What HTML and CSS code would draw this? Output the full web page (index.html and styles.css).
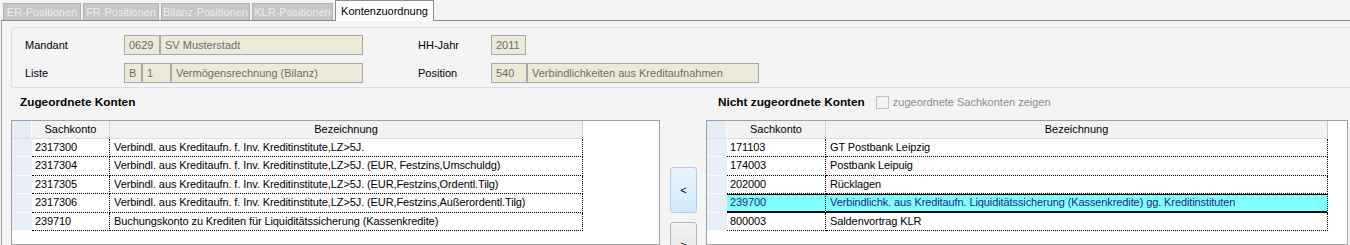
FILE: index.html
```html
<!DOCTYPE html>
<html lang="de">
  <head>
    <meta charset="utf-8" />
    <title>Kontenzuordnung</title>
    <link rel="stylesheet" href="styles.css">
  </head>
  <body>
    <!-- Tabs -->
    <div class="tabs">
      <div class="tab w-er">ER-Positionen</div>
      <div class="tab w-fr">FR-Positionen</div>
      <div class="tab w-bil">Bilanz-Positionen</div>
      <div class="tab w-klr">KLR-Positionen</div>
      <div class="tab active">Kontenzuordnung</div>
    </div>

    <div class="page">
      <!-- Kopfdaten -->
      <div class="group">
        <div class="form-row">
          <span class="label">Mandant</span>
          <div class="fields">
            <span class="field f-36">0629</span>
            <span class="field f-203">SV Musterstadt</span>
          </div>
          <span class="label label-2">HH-Jahr</span>
          <div class="fields">
            <span class="field f-35">2011</span>
          </div>
        </div>
        <div class="form-row">
          <span class="label">Liste</span>
          <div class="fields">
            <span class="field f-18">B</span>
            <span class="field f-29">1</span>
            <span class="field f-192">Vermögensrechnung (Bilanz)</span>
          </div>
          <span class="label label-2">Position</span>
          <div class="fields">
            <span class="field f-36">540</span>
            <span class="field f-232">Verbindlichkeiten aus Kreditaufnahmen</span>
          </div>
        </div>
      </div>

      <div class="lists">
        <!-- Zugeordnete Konten -->
        <div class="list list-left">
          <div class="list-head">
            <h2>Zugeordnete Konten</h2>
          </div>
          <div class="grid">
            <div class="row header">
              <div class="rh"></div>
              <div class="c1">Sachkonto</div>
              <div class="c2">Bezeichnung</div>
            </div>
            <div class="row">
              <div class="rh"></div>
              <div class="c1">2317300</div>
              <div class="c2">Verbindl. aus Kreditaufn. f. Inv. Kreditinstitute,LZ&gt;5J.</div>
            </div>
            <div class="row">
              <div class="rh"></div>
              <div class="c1">2317304</div>
              <div class="c2">Verbindl. aus Kreditaufn. f. Inv. Kreditinstitute,LZ&gt;5J. (EUR, Festzins,Umschuldg)</div>
            </div>
            <div class="row">
              <div class="rh"></div>
              <div class="c1">2317305</div>
              <div class="c2">Verbindl. aus Kreditaufn. f. Inv. Kreditinstitute,LZ&gt;5J. (EUR,Festzins,Ordentl.Tilg)</div>
            </div>
            <div class="row">
              <div class="rh"></div>
              <div class="c1">2317306</div>
              <div class="c2">Verbindl. aus Kreditaufn. f. Inv. Kreditinstitute,LZ&gt;5J. (EUR,Festzins,Außerordentl.Tilg)</div>
            </div>
            <div class="row">
              <div class="rh"></div>
              <div class="c1">239710</div>
              <div class="c2">Buchungskonto zu Krediten für Liquiditätssicherung (Kassenkredite)</div>
            </div>
          </div>
        </div>

        <!-- Buttons -->
        <div class="move-buttons">
          <button class="btn">&lt;</button>
          <button class="btn">&gt;</button>
        </div>

        <!-- Nicht zugeordnete Konten -->
        <div class="list list-right">
          <div class="list-head">
            <h2>Nicht zugeordnete Konten</h2>
            <label class="check"><span class="box"></span>zugeordnete Sachkonten zeigen</label>
          </div>
          <div class="grid">
            <div class="row header">
              <div class="rh"></div>
              <div class="c1">Sachkonto</div>
              <div class="c2">Bezeichnung</div>
            </div>
            <div class="row">
              <div class="rh"></div>
              <div class="c1">171103</div>
              <div class="c2">GT Postbank Leipzig</div>
            </div>
            <div class="row">
              <div class="rh"></div>
              <div class="c1">174003</div>
              <div class="c2">Postbank Leipuig</div>
            </div>
            <div class="row">
              <div class="rh"></div>
              <div class="c1">202000</div>
              <div class="c2">Rücklagen</div>
            </div>
            <div class="row selected">
              <div class="rh"></div>
              <div class="c1">239700</div>
              <div class="c2">Verbindlichk. aus Kreditaufn. Liquiditätssicherung (Kassenkredite) gg. Kreditinstituten</div>
            </div>
            <div class="row">
              <div class="rh"></div>
              <div class="c1">800003</div>
              <div class="c2">Saldenvortrag KLR</div>
            </div>
          </div>
        </div>
      </div>
    </div>
  </body>
</html>
```

FILE: styles.css
```css
* {
  margin: 0;
  padding: 0;
  box-sizing: border-box;
}
body {
  width: 1350px;
  height: 245px;
  overflow: hidden;
  background-color: #f4f4f4;
  font-family: "Liberation Sans", Arial, sans-serif;
  font-size: 11px;
  color: #000000;
}

/* Tabs */
.tabs {
  display: flex;
  align-items: flex-end;
  height: 21px;
  padding-left: 3px;
  margin-bottom: -1px;
  position: relative;
  z-index: 1;
}
.tab {
  height: 17px;
  margin-bottom: 1px;
  margin-right: 2px;
  background-color: #c6c6c6;
  border: 1px solid #b3b3b3;
  border-bottom: none;
  color: #ececec;
  line-height: 17px;
  text-align: center;
  white-space: nowrap;
}
.w-er { width: 78px; }
.w-fr { width: 76px; }
.w-bil { width: 89px; }
.w-klr { width: 81px; }
.tab.active {
  width: 99px;
  height: 21px;
  margin-bottom: 0;
  background-color: #ffffff;
  border-color: #898c95;
  color: #000000;
  line-height: 20px;
}

/* Tab page */
.page {
  margin-left: 1px;
  height: 225px;
  border-top: 1px solid #898c95;
  border-left: 1px solid #a0a0a0;
}
.group {
  margin: 6px -30px 0 9px;
  padding: 7px 0 4px 13px;
  border: 1px solid #d5dfe5;
  border-radius: 3px;
}
.form-row {
  display: flex;
  align-items: center;
  height: 20px;
}
.form-row + .form-row {
  margin-top: 8px;
}
.label {
  width: 99px;
}
.label-2 {
  width: 73px;
  margin-left: 55px;
}
.fields {
  display: flex;
}
.field {
  height: 20px;
  padding-left: 4px;
  background-color: #ece9d8;
  border: 1px solid #a8a8a8;
  color: #6d6d6d;
  line-height: 18px;
  white-space: nowrap;
}
.f-18 { width: 18px; }
.f-29 { width: 29px; }
.f-35 { width: 35px; }
.f-36 { width: 36px; }
.f-192 { width: 192px; }
.f-203 { width: 203px; }
.f-232 { width: 232px; }

/* Lists */
.lists {
  display: flex;
  margin-left: 9px;
}
.list-left {
  width: 649px;
}
.list-right {
  width: 642px;
}
.list-head {
  display: flex;
  align-items: center;
  height: 32px;
  padding: 0 0 4px 9px;
}
.list-right .list-head {
  padding-left: 12px;
}
h2 {
  font-size: 11.8px;
  font-weight: bold;
}
.check {
  display: flex;
  align-items: center;
  margin-left: 11px;
  color: #8d8d8d;
}
.box {
  width: 13px;
  height: 13px;
  margin-right: 4px;
  border: 1px solid #c4c4c4;
  background-color: #f4f4f4;
}

/* Grids */
.grid {
  height: 125px;
  background-color: #ffffff;
  border: 1px solid #a0a0a0;
}
.row {
  display: flex;
  height: 18.4px;
  line-height: 17px;
  white-space: nowrap;
  letter-spacing: -0.1px;
}
.rh {
  width: 20px;
  background-color: #e8eef7;
  border-bottom: 1px solid #f6f9fc;
}
.c1,
.c2 {
  border-right: 1px dotted #000000;
  border-bottom: 1px dotted #000000;
  padding-left: 3px;
  overflow: hidden;
}
.c2 {
  padding-left: 4px;
}
.list-left .c1 { width: 78px; }
.list-left .c2 { width: 473px; }
.list-right .c1 { width: 99px; }
.list-right .c2 { width: 502px; }

.row.header {
  height: 18px;
  line-height: 17px;
  letter-spacing: 0;
}
.header .rh {
  background-color: #e6ecf5;
  border-right: 1px solid #ffffff;
  border-bottom: 1px solid #d8dde6;
}
.header .c1,
.header .c2 {
  padding-left: 0;
  background-color: #f2f2f2;
  border-right: 1px solid #d5d5d5;
  border-bottom: 1px solid #d8dde6;
  text-align: center;
}
.header .c2 {
  border-right: 1px solid #c8c8c8;
}

.selected .c1,
.selected .c2 {
  background-color: #80ffff;
  color: #1f1f8f;
  border-top: 1px solid #000000;
  border-bottom: 2px solid #000000;
  line-height: 15px;
}

/* Move buttons */
.move-buttons {
  width: 46px;
  padding: 79px 0 0 10px;
  display: flex;
  flex-direction: column;
  gap: 9px;
}
.btn {
  flex: none;
  width: 27px;
  height: 46px;
  border: 1px solid #a9cfee;
  border-radius: 3px;
  background: linear-gradient(#e6f3fc, #d3eaf9);
  font-family: "Liberation Sans", Arial, sans-serif;
  font-size: 11px;
  color: #000000;
}
.btn + .btn {
  border-color: #b5b5b5;
  background: linear-gradient(#f2f2f2, #e0e0e0);
}
```
